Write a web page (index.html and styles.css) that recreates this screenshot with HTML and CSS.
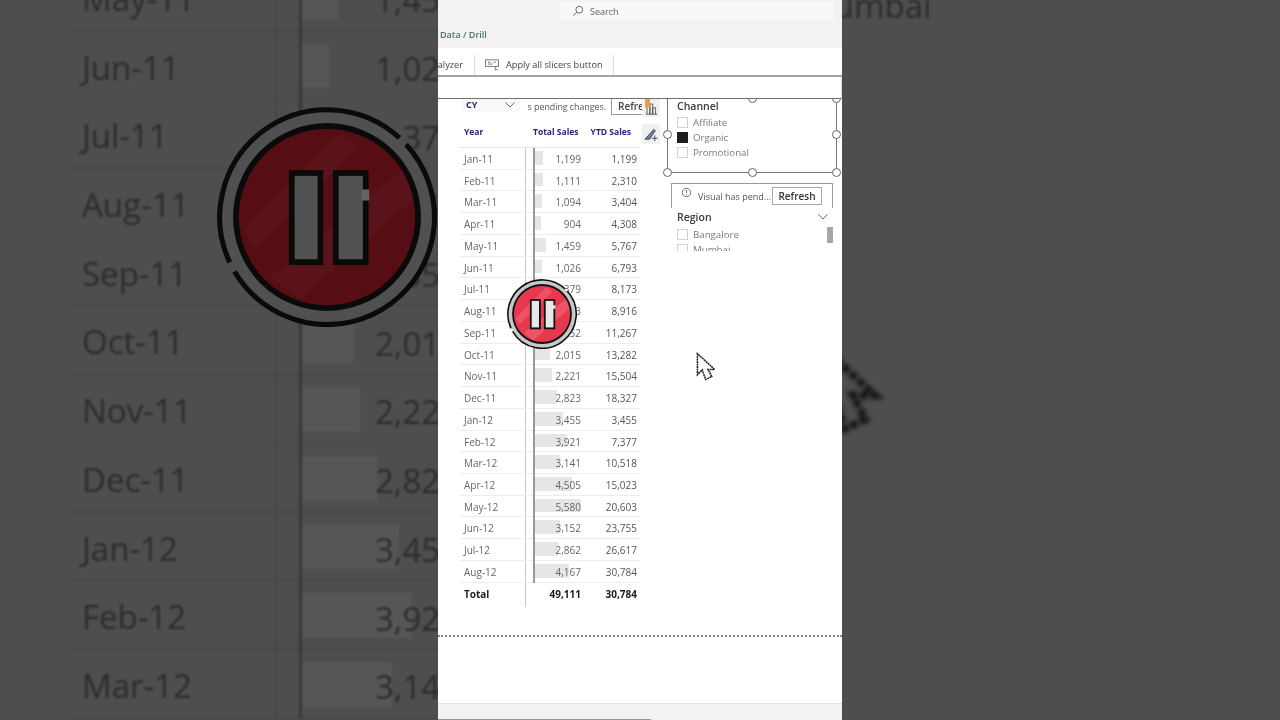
FILE: index.html
```html
<!DOCTYPE html>
<html lang="en">
<head>
<meta charset="utf-8" />
<title>Report</title>
<link rel="stylesheet" href="styles.css">
</head>
<body>
<svg class="defs" aria-hidden="true">
    <defs>
        <clipPath id="faceclip"><circle cx="50" cy="50" r="41.4" /></clipPath>
        <symbol id="pause" viewBox="0 0 100 100">
            <circle cx="50" cy="50" r="48" class="p-ring" />
            <path d="M85.95 17.04A48.8 48.8 0 1 1 7.97 74.8M5.78 70.62A48.8 48.8 0 0 1 82.97 14.05" class="p-line" stroke-width="2.3" />
            <circle cx="50" cy="50" r="41.4" class="p-red" />
            <g clip-path="url(#faceclip)">
                <polygon points="12,55.9 55.9,12 65,18 18,65" class="p-light" />
                <polygon points="24.1,77.1 86.2,27.1 92.3,39.2 37.7,87.7" class="p-light" />
            </g>
            <circle cx="50" cy="50" r="41.4" class="p-line" stroke-width="2.6" />
            <rect x="34" y="30" width="13" height="40.5" class="p-bar" stroke-width="2.6" />
            <rect x="54" y="30" width="13.6" height="40.5" class="p-bar" stroke-width="2.6" />
            <rect x="65.8" y="37.5" width="3.4" height="5" class="p-notch" />
        </symbol>
    </defs>
</svg>

<div class="stage">

    <!-- left zoomed copy -->
    <div class="side">
        <div class="zoomrows">
            <div class="zrow"><div class="zmonth">May-11</div><div class="zsales"><span class="zbar" style="width:36px"></span><span class="znum">1,459</span></div></div>
            <div class="zrow"><div class="zmonth">Jun-11</div><div class="zsales"><span class="zbar" style="width:27px"></span><span class="znum">1,026</span></div></div>
            <div class="zrow"><div class="zmonth">Jul-11</div><div class="zsales"><span class="zbar" style="width:9px"></span><span class="znum">379</span></div></div>
            <div class="zrow"><div class="zmonth">Aug-11</div><div class="zsales"><span class="zbar" style="width:20px"></span><span class="znum">743</span></div></div>
            <div class="zrow"><div class="zmonth">Sep-11</div><div class="zsales"><span class="zbar" style="width:62px"></span><span class="znum">2,352</span></div></div>
            <div class="zrow"><div class="zmonth">Oct-11</div><div class="zsales"><span class="zbar" style="width:52px"></span><span class="znum">2,015</span></div></div>
            <div class="zrow"><div class="zmonth">Nov-11</div><div class="zsales"><span class="zbar" style="width:58px"></span><span class="znum">2,221</span></div></div>
            <div class="zrow"><div class="zmonth">Dec-11</div><div class="zsales"><span class="zbar" style="width:76px"></span><span class="znum">2,823</span></div></div>
            <div class="zrow"><div class="zmonth">Jan-12</div><div class="zsales"><span class="zbar" style="width:97px"></span><span class="znum">3,455</span></div></div>
            <div class="zrow"><div class="zmonth">Feb-12</div><div class="zsales"><span class="zbar" style="width:110px"></span><span class="znum">3,921</span></div></div>
            <div class="zrow"><div class="zmonth">Mar-12</div><div class="zsales"><span class="zbar" style="width:90px"></span><span class="znum">3,141</span></div></div>
        </div>
        <svg class="pause-big"><use href="#pause" /></svg>
    </div>

    <!-- middle, the real window -->
    <div class="center">
        <div class="topbar">
            <div class="searchrow">
                <div class="search">
                    <svg class="ic-search" viewBox="0 0 14 14"><circle cx="8.5" cy="5.5" r="4" /><path d="M5.5 8.5L1.5 12.5" /></svg>
                    <span>Search</span>
                </div>
            </div>
            <div class="breadcrumb">Data / Drill</div>
        </div>
        <div class="ribbon">
            <div class="rib-item rib-cut"><span>Analyzer</span></div>
            <div class="rib-item rib-apply">
                <svg class="ic-apply" viewBox="0 0 16 12"><rect x="0.5" y="0.5" width="14" height="7" /><path d="M3 3h3M3 5h5M9 3h3M11 8v3.5l1.5-1 1 1.5" /></svg>
                Apply all slicers button
            </div>
        </div>
        <div class="formula"></div>

        <div class="canvas">
            <div class="report">
                <div class="pendingrow">
                    <div class="dropdown"><span>CY</span><svg class="ic-chev" viewBox="0 0 10 6"><path d="M0.5 0.5L5 5L9.5 0.5" /></svg></div>
                    <div class="pendingcut"><span>Visual has pending changes.</span></div>
                    <div class="refre">Refresh</div>
                </div>
                <div class="row head"><div class="month">Year</div><div class="sales">Total Sales</div><div class="ytd">YTD Sales</div></div>
                <div class="row"><div class="month">Jan-11</div><div class="sales"><span class="bar" style="width:10px"></span><span class="num">1,199</span></div><div class="ytd">1,199</div></div>
                <div class="row"><div class="month">Feb-11</div><div class="sales"><span class="bar" style="width:10px"></span><span class="num">1,111</span></div><div class="ytd">2,310</div></div>
                <div class="row"><div class="month">Mar-11</div><div class="sales"><span class="bar" style="width:9px"></span><span class="num">1,094</span></div><div class="ytd">3,404</div></div>
                <div class="row"><div class="month">Apr-11</div><div class="sales"><span class="bar" style="width:8px"></span><span class="num">904</span></div><div class="ytd">4,308</div></div>
                <div class="row"><div class="month">May-11</div><div class="sales"><span class="bar" style="width:13px"></span><span class="num">1,459</span></div><div class="ytd">5,767</div></div>
                <div class="row"><div class="month">Jun-11</div><div class="sales"><span class="bar" style="width:9px"></span><span class="num">1,026</span></div><div class="ytd">6,793</div></div>
                <div class="row"><div class="month">Jul-11</div><div class="sales"><span class="bar" style="width:3px"></span><span class="num">379</span></div><div class="ytd">8,173</div></div>
                <div class="row"><div class="month">Aug-11</div><div class="sales"><span class="bar" style="width:6px"></span><span class="num">743</span></div><div class="ytd">8,916</div></div>
                <div class="row"><div class="month">Sep-11</div><div class="sales"><span class="bar" style="width:20px"></span><span class="num">2,352</span></div><div class="ytd">11,267</div></div>
                <div class="row"><div class="month">Oct-11</div><div class="sales"><span class="bar" style="width:17px"></span><span class="num">2,015</span></div><div class="ytd">13,282</div></div>
                <div class="row"><div class="month">Nov-11</div><div class="sales"><span class="bar" style="width:19px"></span><span class="num">2,221</span></div><div class="ytd">15,504</div></div>
                <div class="row"><div class="month">Dec-11</div><div class="sales"><span class="bar" style="width:24px"></span><span class="num">2,823</span></div><div class="ytd">18,327</div></div>
                <div class="row"><div class="month">Jan-12</div><div class="sales"><span class="bar" style="width:30px"></span><span class="num">3,455</span></div><div class="ytd">3,455</div></div>
                <div class="row"><div class="month">Feb-12</div><div class="sales"><span class="bar" style="width:34px"></span><span class="num">3,921</span></div><div class="ytd">7,377</div></div>
                <div class="row"><div class="month">Mar-12</div><div class="sales"><span class="bar" style="width:27px"></span><span class="num">3,141</span></div><div class="ytd">10,518</div></div>
                <div class="row"><div class="month">Apr-12</div><div class="sales"><span class="bar" style="width:39px"></span><span class="num">4,505</span></div><div class="ytd">15,023</div></div>
                <div class="row"><div class="month">May-12</div><div class="sales"><span class="bar" style="width:48px"></span><span class="num">5,580</span></div><div class="ytd">20,603</div></div>
                <div class="row"><div class="month">Jun-12</div><div class="sales"><span class="bar" style="width:27px"></span><span class="num">3,152</span></div><div class="ytd">23,755</div></div>
                <div class="row"><div class="month">Jul-12</div><div class="sales"><span class="bar" style="width:25px"></span><span class="num">2,862</span></div><div class="ytd">26,617</div></div>
                <div class="row"><div class="month">Aug-12</div><div class="sales"><span class="bar" style="width:36px"></span><span class="num">4,167</span></div><div class="ytd">30,784</div></div>
                <div class="row total"><div class="month">Total</div><div class="sales">49,111</div><div class="ytd">30,784</div></div>
            </div>

            <div class="tools">
                <div class="toolbtn">
                    <svg class="ic-tool" viewBox="0 0 16 16"><path d="M2.5 15V5.5h3.5V15M6 15V2.5h3.5V15M9.5 15V7h3.5v8M1 15h14" /></svg>
                    <span class="toolmark"></span>
                </div>
                <div class="toolbtn tool2">
                    <svg class="ic-tool ic-brush" viewBox="0 0 16 16"><path class="brush" d="M1 13L10.5 2.5l1.5 1.5L6 13z" /><path d="M11.5 9v6M8.5 12h6" /></svg>
                </div>
            </div>

            <div class="slicers">
                <div class="chanbox">
                    <div class="s-title">Channel</div>
                    <div class="s-item"><span class="check"></span>Affiliate</div>
                    <div class="s-item"><span class="check on"></span>Organic</div>
                    <div class="s-item"><span class="check"></span>Promotional</div>
                    <span class="handle h-tc"></span>
                    <span class="handle h-tr"></span>
                    <span class="handle h-ml"></span>
                    <span class="handle h-mr"></span>
                    <span class="handle h-bl"></span>
                    <span class="handle h-bc"></span>
                    <span class="handle h-br"></span>
                </div>
                <div class="pendbox">
                    <svg class="ic-info" viewBox="0 0 12 12"><circle cx="6" cy="6" r="4.6" /><path d="M6 3.2v3.4M6 8v1" /></svg>
                    <span class="pendtext">Visual has pend...</span>
                    <div class="refresh">Refresh</div>
                </div>
                <div class="regionbox">
                    <div class="s-title regionhead">Region<svg class="ic-chev2" viewBox="0 0 10 6"><path d="M0.5 0.5L5 5L9.5 0.5" /></svg></div>
                    <div class="regionlist">
                        <div class="s-item"><span class="check"></span>Bangalore</div>
                        <div class="s-item"><span class="check"></span>Mumbai</div>
                        <span class="scrollthumb"></span>
                    </div>
                </div>
            </div>
        </div>

        <div class="blank"></div>
        <div class="footer"><div class="hscroll"></div></div>

        <svg class="cursor" viewBox="0 0 22 32"><path d="M1.5 1.5V23.5L6.5 18.5L10 28.5L16.5 25.5L12.5 18L19.5 18Z" /></svg>
    </div>

    <!-- right zoomed copy -->
    <div class="side side-right">
        <div class="zmumbai">Mumbai</div>
        <svg class="zcursor" viewBox="0 0 22 32"><path d="M1.5 1.5V23.5L6.5 18.5L10 28.5L16.5 25.5L12.5 18L19.5 18Z" /></svg>
    </div>

    <svg class="pause-small"><use href="#pause" /></svg>
</div>
</body>
</html>
```

FILE: styles.css
```css
html, body {margin:0;padding:0;width:1280px;height:720px;overflow:hidden;background:#4e4e4e;}
body {font-family:"Open Sans","Liberation Sans",sans-serif;color:#555;}
.defs {width:0;height:0;display:block;}
.stage {display:flex;width:1280px;height:720px;position:relative;overflow:hidden;}

/*====================Side panels=====================*/
.side {width:438px;height:720px;background:#4e4e4e;position:relative;overflow:hidden;flex:none;}
.zoomrows {margin-top:-37px;filter:blur(1.2px);}
.zrow {display:flex;height:68.7px;width:520px;margin-left:72px;border-bottom:2px solid #484848;box-sizing:border-box;align-items:stretch;}
.zmonth {width:205px;box-sizing:border-box;padding:3px 0 0 10px;border-right:2px solid #474747;font-size:33px;line-height:66px;color:#2c2c2c;flex:none;}
.zsales {width:160px;margin-left:22px;border-left:3px solid #383838;display:flex;justify-content:flex-end;align-items:center;position:relative;flex:none;box-sizing:border-box;margin-bottom:-2px;padding-top:5px;}
.zbar {position:absolute;left:0;top:12px;bottom:12px;background:#565656;}
.znum {position:relative;font-size:33px;color:#2c2c2c;white-space:nowrap;}
.pause-big {position:absolute;left:217px;top:107px;width:220px;height:220px;--ring:#505050;--line:#0a0a0a;--red:#560d14;--light:#5a131b;--bar:#525252;--notch:#646464;}
.side-right {width:438px;}
.zmumbai {font-size:33px;line-height:40px;margin-top:-14px;margin-left:-38px;color:#2c2c2c;filter:blur(1.2px);}
.zcursor {position:absolute;left:-29px;top:338px;width:70px;height:102px;filter:blur(2px);}
.zcursor path {fill:none;stroke:#161616;stroke-width:2.4;stroke-dasharray:2.4 .8;}

/*====================Pause badge=====================*/
.pause-small {position:absolute;left:507px;top:279px;width:70px;height:70px;--ring:#c9c9c9;--line:#111;--red:#e8384e;--light:#ee5267;--bar:#e8e8e8;--notch:#e8e8e8;}
.p-ring {fill:var(--ring);}
.p-line {fill:none;stroke:var(--line);}
.p-red {fill:var(--red);}
.p-light {fill:var(--light);}
.p-bar {fill:var(--bar);stroke:var(--line);}
.p-notch {fill:var(--notch);}

/*====================Window=====================*/
.center {width:404px;height:720px;background:#fff;display:flex;flex-direction:column;position:relative;overflow:hidden;flex:none;filter:blur(.35px);}
.topbar {height:48px;background:#f3f2f1;flex:none;}
.searchrow {padding:2px 8px 0 122px;}
.search {height:18px;background:#f8f8f7;display:flex;align-items:center;padding-left:12px;font-size:9px;color:#666;gap:6px;}
.ic-search {width:12px;height:12px;fill:none;stroke:#555;stroke-width:1;}
.breadcrumb {font-size:9px;font-weight:600;color:#4f736a;padding:9px 0 0 2px;line-height:12px;}

.ribbon {height:27px;border-bottom:2px solid #a3a3a3;display:flex;flex:none;background:#fff;align-items:center;overflow:hidden;}
.rib-item {font-size:9.2px;color:#444;height:20px;line-height:20px;white-space:nowrap;position:relative;top:3px;}
.rib-cut {width:37px;box-sizing:border-box;display:flex;justify-content:flex-end;padding-right:11px;overflow:hidden;border-right:1px solid #ddd;flex:none;}
.rib-cut span {flex:none;}
.rib-apply {display:flex;align-items:center;gap:6px;padding:0 10px;border-right:1px solid #ddd;}
.ic-apply {width:15px;height:12px;fill:none;stroke:#555;stroke-width:.8;}
.formula {height:21px;border-bottom:1px solid #6f6f6f;border-right:1px solid #ddd;flex:none;background:#fff;}

/*====================Canvas=====================*/
.canvas {height:536px;display:flex;flex:none;border-bottom:2px dotted #888;overflow:hidden;}
.report {width:180px;margin-left:22px;flex:none;}
.pendingrow {height:16px;display:flex;position:relative;align-items:flex-start;}
.dropdown {width:58px;height:15px;background:#f9f9f9;display:flex;align-items:center;justify-content:space-between;padding:0 5px 0 4px;box-sizing:border-box;font-size:9px;font-weight:700;color:#2a2178;flex:none;margin-left:2px;margin-top:-2px;}
.ic-chev {width:10px;height:6px;fill:none;stroke:#666;stroke-width:1;}
.pendingcut {width:79px;height:16px;margin-left:7px;overflow:hidden;display:flex;justify-content:flex-end;font-size:8.8px;line-height:16px;white-space:nowrap;color:#555;flex:none;}
.pendingcut span {flex:none;}
.refre {width:40px;height:16px;margin-left:5px;border:1px solid #999;border-top:0;box-sizing:border-box;font-size:10px;font-weight:600;color:#444;padding-left:6px;overflow:hidden;line-height:15px;flex:none;white-space:nowrap;}

.row {display:flex;height:21.74px;border-bottom:1px solid #ededed;box-sizing:border-box;font-size:10px;line-height:22px;color:#666;}
.month {width:66px;box-sizing:border-box;padding-left:4px;border-right:1px solid #c8c8c8;flex:none;}
.sales {width:48px;margin-left:7px;border-left:2px solid transparent;box-sizing:border-box;position:relative;text-align:right;flex:none;}
.sales::before {content:"";position:absolute;left:-2px;top:0;bottom:-1px;width:1.5px;background:#999;z-index:1;}
.ytd {width:56px;text-align:right;flex:none;color:#555;}
.bar {position:absolute;left:-2px;top:3px;bottom:4px;background:#e6e6e6;}
.num {position:relative;}
.head {height:33px;border-bottom:1px solid #e4e4e4;font-size:8.5px;font-weight:700;color:#2a2178;line-height:33px;}
.head .month {border-right:0;}
.head .sales {border-left:0;text-align:left;white-space:nowrap;}
.head .sales::before {display:none;}
.head .ytd {color:#2a2178;padding-right:6px;box-sizing:border-box;white-space:nowrap;}
.total {height:24px;border-bottom:0;font-weight:700;color:#1c1c1c;line-height:23px;}
.total .sales {border-left:0;}
.total .sales::before {display:none;}
.total .ytd {color:#1c1c1c;}
.total .month {color:#1c1c1c;}

.tools {width:18px;margin-left:2px;flex:none;position:relative;}
.toolbtn {height:18px;background:#f1f1f1;display:flex;align-items:center;justify-content:center;position:relative;}
.tool2 {margin-top:7px;height:20px;}
.ic-tool {width:13px;height:13px;fill:none;stroke:#444;stroke-width:1;margin-top:0;}
.ic-tool.ic-brush {width:15px;height:15px;margin-top:0;}
.ic-tool .brush {fill:#6c7fb0;stroke:#445;}
.toolmark {position:absolute;left:3px;top:0;width:5px;height:8px;background:#e0a050;}

.slicers {width:170px;margin-left:7px;flex:none;}
.chanbox {height:74px;border:1px solid #777;border-top:0;box-sizing:border-box;padding-left:9px;position:relative;}
.s-title {font-size:10.5px;font-weight:600;color:#3a3a3a;line-height:14px;}
.chanbox .s-title {margin-bottom:2px;}
.s-item {display:flex;align-items:center;gap:5px;font-size:9.7px;line-height:15px;color:#7a7a7a;height:15px;}
.check {width:9px;height:9px;border:1px solid #d2d2d2;flex:none;background:#fff;}
.check.on {background:#1d1d1d;border-color:#1d1d1d;}
.handle {position:absolute;width:7px;height:7px;border:1px solid #666;border-radius:50%;background:#fff;}
.h-tc {left:80px;top:-5px;}
.h-tr {right:-5px;top:-5px;}
.h-ml {left:-5px;top:31px;}
.h-mr {right:-5px;top:31px;}
.h-bl {left:-5px;bottom:-5px;}
.h-bc {left:80px;bottom:-5px;}
.h-br {right:-5px;bottom:-5px;}

.pendbox {margin:10px 4px 0 4px;height:25px;border:1px solid #999;border-bottom:0;box-sizing:border-box;display:flex;align-items:center;padding-left:9px;position:relative;}
.ic-info {width:11px;height:11px;fill:none;stroke:#555;stroke-width:.9;flex:none;margin-top:-7px;}
.pendtext {font-size:9px;color:#555;margin-left:6px;white-space:nowrap;width:74px;flex:none;}
.refresh {width:50px;height:18px;border:1px solid #aaa;box-sizing:border-box;font-size:10px;font-weight:600;color:#333;text-align:center;line-height:16px;flex:none;}

.regionbox {height:41px;overflow:hidden;padding:2px 0 0 10px;box-sizing:content-box;}
.regionhead {display:flex;justify-content:space-between;align-items:center;padding-right:9px;margin-bottom:3px;}
.ic-chev2 {width:10px;height:6px;fill:none;stroke:#666;stroke-width:1;}
.regionlist {position:relative;}
.scrollthumb {position:absolute;right:4px;top:0;width:6px;height:16px;background:#a6a6a6;}

.blank {flex:1;}
.footer {height:17px;background:#f3f2f1;border-top:1px solid #e2e2e2;box-sizing:border-box;flex:none;position:relative;display:flex;align-items:flex-end;}
.hscroll {width:213px;height:1px;background:#999;}

.cursor {position:absolute;left:258px;top:352px;width:21px;height:31px;}
.cursor path {fill:#fff;stroke:#1c1c1c;stroke-width:1.6;stroke-dasharray:2 .6;}
```
